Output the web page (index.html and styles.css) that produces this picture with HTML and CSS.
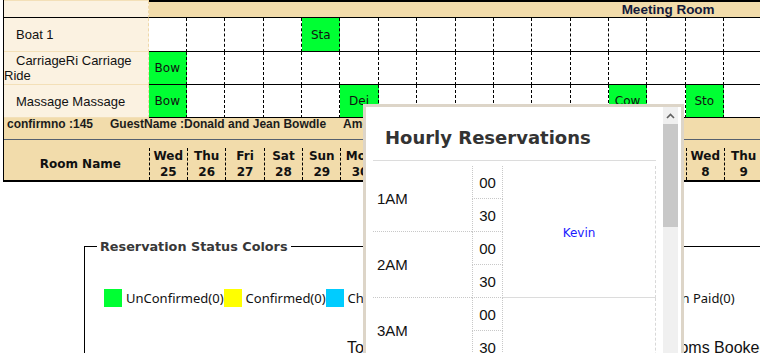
FILE: index.html
```html
<!DOCTYPE html>
<html>
<head>
<meta charset="utf-8">
<link rel="stylesheet" href="styles.css">
</head>
<body>
<div class="sched">
  <div class="row prev">
    <div class="name tan"></div>
    <div class="c"></div><div class="c"></div><div class="c"></div><div class="c"></div><div class="c"></div><div class="c"></div><div class="c"></div><div class="c"></div><div class="c"></div><div class="c"></div><div class="c"></div><div class="c"></div><div class="c"></div><div class="c"></div><div class="c"></div><div class="c"></div><div class="c"></div>
  </div>
  <div class="row group">
    <div class="name tan"></div>
    <div class="grp">Meeting Room</div>
  </div>
  <div class="row r1">
    <div class="name"><div class="nm">Boat 1</div></div>
    <div class="c"></div><div class="c"></div><div class="c"></div><div class="c"></div><div class="c g">Sta</div><div class="c"></div><div class="c"></div><div class="c"></div><div class="c"></div><div class="c"></div><div class="c"></div><div class="c"></div><div class="c"></div><div class="c"></div><div class="c"></div><div class="c"></div><div class="c"></div>
  </div>
  <div class="row r2">
    <div class="name"><div class="nm">CarriageRi Carriage Ride</div></div>
    <div class="c g">Bow</div><div class="c"></div><div class="c"></div><div class="c"></div><div class="c"></div><div class="c"></div><div class="c"></div><div class="c"></div><div class="c"></div><div class="c"></div><div class="c"></div><div class="c"></div><div class="c"></div><div class="c"></div><div class="c"></div><div class="c"></div><div class="c"></div>
  </div>
  <div class="row r3">
    <div class="name"><div class="nm">Massage Massage</div></div>
    <div class="c g">Bow</div><div class="c"></div><div class="c"></div><div class="c"></div><div class="c"></div><div class="c g">Dei</div><div class="c"></div><div class="c"></div><div class="c"></div><div class="c"></div><div class="c"></div><div class="c"></div><div class="c g">Cow</div><div class="c"></div><div class="c g">Sto</div><div class="c"></div><div class="c"></div>
  </div>
  <div class="info">
    <span>confirmno :145</span>
    <span>GuestName :Donald and Jean Bowdle</span>
    <span>Amount :450.00</span>
  </div>
  <div class="row head">
    <div class="hname">Room Name</div>
    <div class="hd"><div class="hdi">Wed<br>25</div></div>
    <div class="hd"><div class="hdi">Thu<br>26</div></div>
    <div class="hd"><div class="hdi">Fri<br>27</div></div>
    <div class="hd"><div class="hdi">Sat<br>28</div></div>
    <div class="hd"><div class="hdi">Sun<br>29</div></div>
    <div class="hd"><div class="hdi">Mon<br>30</div></div>
    <div class="hd"><div class="hdi">Tue<br>31</div></div>
    <div class="hd"><div class="hdi">Wed<br>1</div></div>
    <div class="hd"><div class="hdi">Thu<br>2</div></div>
    <div class="hd"><div class="hdi">Fri<br>3</div></div>
    <div class="hd"><div class="hdi">Sat<br>4</div></div>
    <div class="hd"><div class="hdi">Sun<br>5</div></div>
    <div class="hd"><div class="hdi">Mon<br>6</div></div>
    <div class="hd"><div class="hdi">Tue<br>7</div></div>
    <div class="hd"><div class="hdi">Wed<br>8</div></div>
    <div class="hd"><div class="hdi">Thu<br>9</div></div>
    <div class="hd"><div class="hdi">Fri<br>10</div></div>
  </div>
</div>

<fieldset class="status">
  <legend>Reservation Status Colors</legend>
  <div class="legend-items">
    <div class="li"><span class="sq green"></span>UnConfirmed(0)</div>
    <div class="li"><span class="sq yellow"></span>Confirmed(0)</div>
    <div class="li"><span class="sq blue"></span>CheckedIn(0)</div>
    <div class="li"><span class="sq red"></span>CheckedOut(0)</div>
    <div class="li"><span class="sq grey"></span>Blocked(0)</div>
    <div class="li last"><span class="sq orange"></span>Token Paid(0)</div>
  </div>
  <div class="totals">
    <span>Total Rooms : 16</span>
    <span>Available Rooms : 10</span>
    <span>Rooms Booked : 6</span>
  </div>
</fieldset>

<div class="popup">
  <div class="pop-main">
    <h2 class="pop-title">Hourly Reservations</h2>
    <div class="pop-rule"></div>
    <div class="hgrid">
      <div class="hour">1AM</div>
      <div class="min">00</div>
      <div class="min">30</div>
      <div class="ev booked">Kevin</div>
      <div class="hour">2AM</div>
      <div class="min">00</div>
      <div class="min">30</div>
      <div class="hour">3AM</div>
      <div class="min">00</div>
      <div class="min">30</div>
      <div class="ev"></div>
      <div class="hour">4AM</div>
      <div class="min">00</div>
      <div class="min">30</div>
    </div>
  </div>
  <div class="sb">
    <div class="sb-up"><svg width="9" height="6" viewBox="0 0 9 6"><polyline points="1,5 4.5,1.5 8,5" fill="none" stroke="#606060" stroke-width="1.6"/></svg></div>
    <div class="sb-thumb"></div>
  </div>
</div>
</body>
</html>
```
FILE: styles.css
```css
html, body {
  margin: 0;
  padding: 0;
  overflow: hidden;
  background: #fff;
}
body {
  width: 760px;
  height: 353px;
  position: relative;
  font-family: "Liberation Sans", Arial, sans-serif;
  color: #111;
}

/* ---------- schedule grid ---------- */
.sched {
  margin-left: 3px;
  border-left: 1px solid #000;
  width: 800px;
}
.row {
  display: grid;
  grid-template-columns: 144.64px repeat(17, 38.36px);
}
.row > div {
  box-sizing: border-box;
}
.tan {
  background: #f2dcab;
}
.prev {
  height: 1px;
}
.prev .c {
  border-right: 1px dashed #000;
}
.group {
  height: 17px;
  background: #f2dcab;
}
.group > div {
  border-bottom: 1px solid #000;
}
.grp {
  grid-column: 2 / -1;
  border-top: 1px solid #000;
  padding-left: 473px;
  font: bold 13.5px/15px "Liberation Sans", Arial, sans-serif;
  color: #141a3a;
  white-space: nowrap;
}
.r1 { height: 34px; }
.r2 { height: 33px; }
.r3 { height: 33px; }
.name {
  background: #fbf2e1;
  border-right: 1px dashed #efd8a8;
  border-bottom: 1px solid #f3e0b8;
  display: flex;
  align-items: center;
  font-size: 13px;
  line-height: 15px;
  color: #111;
}
.nm {
  text-indent: 12px;
}
.c {
  border-right: 1px dashed #000;
  border-bottom: 1px solid #000;
  background: #fff;
}
.c.g {
  background: #00ff33;
  display: flex;
  align-items: center;
  justify-content: center;
  font: 12px "DejaVu Sans", Verdana, sans-serif;
  color: #111;
}
.info {
  height: 22px;
  box-sizing: border-box;
  background: #f2dcab;
  border-bottom: 1px solid #56606e;
  display: flex;
  gap: 17px;
  padding-left: 3px;
  font: bold 12px/13px "Liberation Sans", Arial, sans-serif;
  color: #1c1c1c;
  white-space: nowrap;
}
.head {
  height: 42px;
  background: #f2dcab;
  border-bottom: 2px solid #000;
  box-sizing: border-box;
  font: bold 12px/16px "DejaVu Sans", Verdana, sans-serif;
  color: #111;
}
.hname {
  padding: 8px 0 0 8px;
  line-height: 32px;
  text-align: center;
}
.hd {
  padding-top: 8px;
}
.hdi {
  height: 32px;
  border-left: 1px dashed #000;
  text-align: center;
}

/* ---------- status fieldset ---------- */
.status {
  margin: 57px 0 0 84px;
  width: 900px;
  border: 1px solid #000;
  padding: 0 0 0 12px;
  box-sizing: border-box;
  min-width: 0;
}
.status legend {
  padding: 0 3px;
  font: bold 12.8px/15px "DejaVu Sans", Verdana, sans-serif;
  color: #383838;
}
.legend-items {
  display: flex;
  margin-top: 35px;
  padding-left: 7px;
  font: 13px/18px "Noto Sans", sans-serif;
  color: #111;
  white-space: nowrap;
}
.li {
  display: flex;
  align-items: center;
}
.li.last {
  margin-left: 6px;
}
.sq {
  width: 18px;
  height: 18px;
  margin-right: 4px;
}
.green { background: #00ff33; }
.yellow { background: #ffff00; }
.blue { background: #00ccff; }
.red { background: #ff6666; }
.grey { background: #aaaaaa; }
.orange { background: #ff9900; }
.totals {
  display: flex;
  gap: 20.5px;
  margin-top: 32px;
  padding-left: 250px;
  font: 16px/18px "Liberation Sans", Arial, sans-serif;
  color: #111;
  white-space: nowrap;
}

/* ---------- popup ---------- */
.popup {
  position: absolute;
  left: 363px;
  top: 104px;
  width: 321px;
  height: 262px;
  box-sizing: border-box;
  border: 3px solid #ddd5c8;
  background: #fff;
  display: flex;
  overflow: hidden;
}
.pop-main {
  flex: 1;
  padding: 0 7px;
}
.pop-title {
  margin: 19px 0 10px 12px;
  font: bold 18px/24px "DejaVu Sans", Verdana, sans-serif;
  color: #333;
  white-space: nowrap;
}
.pop-rule {
  border-top: 1px solid #dcdcdc;
}
.hgrid {
  margin-top: 5px;
  display: grid;
  grid-template-columns: 99px 31px 153px;
  grid-auto-rows: 33px;
  grid-auto-flow: row dense;
}
.hgrid > div {
  box-sizing: border-box;
}
.hour {
  grid-column: 1;
  grid-row: span 2;
  border-bottom: 1px dotted #c8c8c8;
  display: flex;
  align-items: center;
  padding-left: 4px;
  font: 15px "Liberation Sans", Arial, sans-serif;
  color: #111;
}
.min {
  grid-column: 2;
  border-left: 1px dotted #c8c8c8;
  border-right: 1px dotted #c8c8c8;
  border-bottom: 1px dotted #c8c8c8;
  display: flex;
  align-items: center;
  justify-content: center;
  font: 15px "Liberation Sans", Arial, sans-serif;
  color: #111;
}
.ev {
  grid-column: 3;
  grid-row: span 4;
  border-right: 1px dashed #d8d8d8;
  border-bottom: 1px solid #dcdcdc;
  display: flex;
  align-items: center;
  justify-content: center;
  padding-top: 2px;
  font: 12px "DejaVu Sans", Verdana, sans-serif;
  color: #1a1aff;
}
.sb {
  width: 15px;
  margin-right: 3px;
  background: #f0f0f0;
  display: flex;
  flex-direction: column;
}
.sb-up {
  height: 17px;
  display: flex;
  align-items: center;
  justify-content: center;
}
.sb-thumb {
  height: 103px;
  background: #c8c8c8;
}
```
